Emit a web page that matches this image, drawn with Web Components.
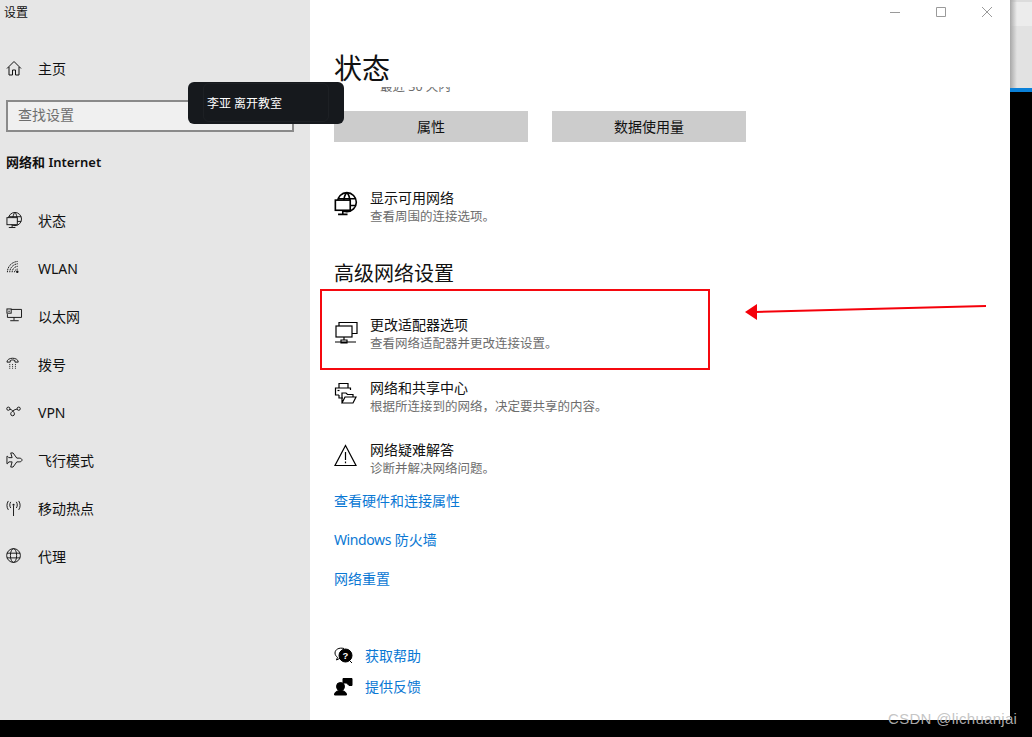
<!DOCTYPE html>
<html lang="zh">
<head>
<meta charset="utf-8">
<title>设置</title>
<style>
    html, body { margin: 0; height: 100%; background: #000; overflow: hidden; }
    body { font-family: "Noto Sans", "Noto Sans CJK SC", sans-serif; }
</style>
</head>
<body>
<settings-desktop>
    <settings-window>
        <settings-sidebar slot="sidebar">
            <nav-item icon="globepc">状态</nav-item>
            <nav-item icon="wifi">WLAN</nav-item>
            <nav-item icon="ethernet">以太网</nav-item>
            <nav-item icon="dial">拨号</nav-item>
            <nav-item icon="vpn">VPN</nav-item>
            <nav-item icon="plane">飞行模式</nav-item>
            <nav-item icon="hotspot">移动热点</nav-item>
            <nav-item icon="globe">代理</nav-item>
        </settings-sidebar>
        <status-page slot="main"></status-page>
    </settings-window>
</settings-desktop>

<script>
const ICONS = {
    home: '<path d="M1 8.5 8 1.5l7 7M3 7v8h3.5v-5h3v5H13V7"/>',
    globepc: '<circle cx="9.5" cy="7.5" r="7"/><path d="M9.5.5c-3 3-3 11 0 14M9.5.5c3 3 3 11 0 14M3 5h13M3 10h13"/><rect x="1" y="6" width="11" height="7.5" fill="#e6e6e6"/><path d="M6.500 13.500v2.500M3 16.500h7"/>',
    globepcw: '<circle cx="9.5" cy="7.5" r="7"/><path d="M9.5.5c-3 3-3 11 0 14M9.5.5c3 3 3 11 0 14M3 5h13M3 10h13"/><rect x="1" y="6" width="11" height="7.5" fill="#fff"/><path d="M6.500 13.500v2.500M3 16.500h7"/>',
    wifi: '<path d="M1.500 13C1.500 7 6 2 12.500 1.500M4 13c0-4.500 3.500-8.500 8.500-9M6.500 13c0-3 2.500-6 6-6.300M9 13c0-1.500 1.300-3.300 3.500-3.300" stroke-dasharray="1.500 .6"/><circle cx="12" cy="12.500" r="1.300" fill="currentColor" stroke="none"/>',
    ethernet: '<path d="M5.500 1.500H16.500V10H1.500V6.500M8.500 10v3M4.500 13.500h9"/><rect x="1" y="1" width="4.500" height="4.500"/><path d="M2.500 2.800h1.500v1.200h-1.500z" fill="currentColor" stroke="none"/>',
    dial: '<path d="M1 6.500C1 1 13 1 13 6.500H9.500V4.800c-1.500-.8-3.500-.8-5 0v1.700z"/><path d="M3.500 9h1M6.500 9h1M9.500 9h1M3.500 11h1M6.500 11h1M9.500 11h1M3.500 13h1M6.500 13h1M9.500 13h1"/>',
    vpn: '<circle cx="2.500" cy="5" r="1.700"/><circle cx="13.500" cy="5" r="1.700"/><path d="M4 5.500c2 0 5 3.500 5 5a2 2 0 0 1-4 0C5 8.500 9 5.500 12 5.500"/>',
    plane: '<path d="M7.500 1H5l1.500 5H3L1.500 4.500H1v8h.5L3 10.500h3.500L5 16h2.500l4-5.500H14c2 0 3-1 3-2s-1-2-3-2h-2.500z"/>',
    hotspot: '<path d="M8 6v11"/><circle cx="8" cy="5" r="1.100" fill="currentColor" stroke="none"/><path d="M5 2c-1.300 2-1.300 4.500 0 6.500M11 2c1.300 2 1.300 4.500 0 6.500M2.500 1C.5 4 .5 7.500 2.500 10.500M13.500 1c2 3 2 6.500 0 9.500"/>',
    globe: '<circle cx="8" cy="8" r="7.300"/><ellipse cx="8" cy="8" rx="3.300" ry="7.300"/><path d="M1 5.500h14M1 10.500h14"/>',
    adapter: '<path d="M5 7V3.500h18v11h-5"/><rect x="2" y="7" width="16" height="11"/><path d="M10 18v3M1 23h21M7 21h6v3H7z"/>',
    share: '<path d="M5 6V1.500h9V6M5 13H1.500V6h15v2M5 13v3h4"/><path d="M8 21V11h4l1.500 1.500H19V15M8 21l3-6h11l-3 6z"/><path d="M3.500 8.500h2"/>',
    warn: '<path d="M11.500 1.500 1 21.500h21z"/><path d="M11.500 8v8M11.500 17.500v1.800"/>',
    help: '<path d="M10 2.500C5 1.200 1 3.500 1 7c0 1.800 1 3.300 2.500 4.300L2.500 14l3.800-1.800"/><circle cx="11.500" cy="9.500" r="6.500" fill="currentColor"/><path d="M15 14l3 3" /><text x="11.500" y="13" font-size="9.500" font-weight="700" font-family="Liberation Sans" text-anchor="middle" fill="#fff" stroke="none">?</text>',
    feedback: '<circle cx="6.500" cy="9.500" r="4" fill="currentColor"/><path d="M.5 18c0-3 2.500-4.500 6-4.500s6 1.500 6 4.500z" fill="currentColor"/><path d="M9 1.500h9v7h-3L12.500 6H9z" fill="currentColor"/>'
};

class SketchIcon extends HTMLElement {
    connectedCallback() {
        var size = this.getAttribute('size') || 16;
        var box = this.getAttribute('box') || 18;
        var weight = this.getAttribute('weight') || 1;
        this.attachShadow({ mode: 'open' }).innerHTML = `
        <style>
            :host { display: inline-flex; flex: none; width: ${size}px; height: ${size}px; color: #111; }
            svg { width: 100%; height: 100%; display: block; fill: none; stroke: currentColor; stroke-width: ${weight}; overflow: visible; }
        </style>
        <svg viewBox="0 0 ${box} ${box}">${ICONS[this.getAttribute('name')] || ''}</svg>`;
    }
}
customElements.define('sketch-icon', SketchIcon);

class SettingsDesktop extends HTMLElement {
    constructor() {
        super();
        this.attachShadow({ mode: 'open' }).innerHTML = `
        <style>
            :host { display: flex; width: 1032px; height: 737px; background: #000; position: relative; overflow: hidden; }
            .strip { flex: 1; align-self: flex-start; height: 92px; position: relative; display: flex; flex-direction: column; }
            .strip i { display: block; }
            .a { height: 2px; background: #dcdcdc; }
            .b { height: 24px; background: #ececec; }
            .c { height: 62px; background: #e2e2e2; }
            .d { height: 4px; background: #0a80d8; }
            .strip::after { content: ""; position: absolute; left: 0; top: 0; bottom: 4px; width: 7px; background: linear-gradient(90deg, #a8a8a8, rgba(200,200,200,0)); }
            .toast { position: absolute; z-index: 5; left: 188px; top: 82px; width: 156px; height: 42px; box-sizing: border-box; background: #16191d; border-radius: 6px; display: flex; align-items: center; }
            .toast span { flex: 1; margin: 2px 16px 3px; height: 37px; display: flex; align-items: center; padding-left: 3px; border-radius: 5px; outline: 1px solid #1d2024; font-size: 12px; color: #fff; }
            .mark { position: absolute; left: 320px; top: 289px; width: 390px; height: 81px; box-sizing: border-box; border: 2px solid #f5090f; }
            .arrow { position: absolute; left: 740px; top: 296px; }
            .wm { position: absolute; left: 888px; top: 710px; font: 15px "Liberation Sans", sans-serif; letter-spacing: .3px; color: rgba(190,190,190,.9); white-space: nowrap; }
        </style>
        <slot></slot>
        <div class="strip"><i class="a"></i><i class="b"></i><i class="c"></i><i class="d"></i></div>
        <div class="toast"><span>李亚 离开教室</span></div>
        <div class="mark"></div>
        <svg class="arrow" width="250" height="30" viewBox="0 0 250 30">
            <path d="M246 10 15 16" stroke="#f5000a" stroke-width="2" fill="none"/>
            <path d="M5 16 17 8V24Z" fill="#f5000a"/>
        </svg>
        <div class="wm">CSDN @lichuanjai</div>`;
    }
}
customElements.define('settings-desktop', SettingsDesktop);

class SettingsWindow extends HTMLElement {
    constructor() {
        super();
        this.attachShadow({ mode: 'open' }).innerHTML = `
        <style>
            :host { display: flex; flex: none; width: 1010px; height: 720px; background: #fff; color: #111; position: relative; }
            .side { flex: none; width: 310px; background: #e6e6e6; }
            .main { flex: 1; min-width: 0; position: relative; }
            .controls { position: absolute; z-index: 2; right: 18px; top: 7px; display: flex; gap: 36px; }
            .controls svg { width: 10px; height: 10px; display: block; stroke: #9a9a9a; fill: none; stroke-width: 1; }
        </style>
        <div class="side"><slot name="sidebar"></slot></div>
        <div class="main">
            <slot name="main"></slot>
            <div class="controls">
                <svg viewBox="0 0 10 10"><path d="M0 5.500H10"/></svg>
                <svg viewBox="0 0 10 10"><path d="M.5.500h9v9h-9z"/></svg>
                <svg viewBox="0 0 10 10"><path d="M0 0 10 10M10 0 0 10"/></svg>
            </div>
        </div>`;
    }
}
customElements.define('settings-window', SettingsWindow);

class SettingsSidebar extends HTMLElement {
    constructor() {
        super();
        this.attachShadow({ mode: 'open' }).innerHTML = `
        <style>
            :host { display: block; font-size: 14px; color: #111; }
            .title { height: 26px; line-height: 26px; padding-left: 4px; font-size: 12px; }
            .home { margin-top: 18px; }
            .search { margin: 8px 16px 0 6px; height: 32px; box-sizing: border-box; border: 2px solid #8a8a8a; background: #f0f0f0; color: #6e6e6e; line-height: 25px; padding-left: 10px; }
            h2 { margin: 20px 0 24px; padding-left: 6px; font-size: 13px; line-height: 20px; font-weight: 600; }
        </style>
        <div class="title">设置</div>
        <nav-item class="home" icon="home">主页</nav-item>
        <div class="search">查找设置</div>
        <h2>网络和 Internet</h2>
        <slot></slot>`;
    }
}
customElements.define('settings-sidebar', SettingsSidebar);

class NavItem extends HTMLElement {
    constructor() {
        super();
        var icon = this.getAttribute('icon');
        this.attachShadow({ mode: 'open' }).innerHTML = `
        <style>
            :host { display: flex; align-items: center; height: 48px; padding-left: 6px; gap: 16px; font-size: 14px; }
            sketch-icon { color: #111; }
        </style>
        <sketch-icon name="${icon}" size="16" box="${icon === 'home' ? 16 : 17}"></sketch-icon>
        <span><slot></slot></span>`;
    }
}
customElements.define('nav-item', NavItem);

class PushButton extends HTMLElement {
    constructor() {
        super();
        this.attachShadow({ mode: 'open' }).innerHTML = `
        <style>
            :host { display: flex; align-items: center; justify-content: center; width: 194px; height: 31px; box-sizing: border-box; padding-bottom: 2px; background: #ccc; font-size: 14px; color: #111; }
        </style>
        <slot></slot>`;
    }
}
customElements.define('push-button', PushButton);

class LinkRow extends HTMLElement {
    constructor() {
        super();
        this.attachShadow({ mode: 'open' }).innerHTML = `
        <style>
            :host { display: flex; gap: 13px; align-items: flex-start; height: 36px; }
            .icon { width: 23px; height: 24px; flex: none; margin-top: 3px; }
            .title { font-size: 14px; line-height: 18px; color: #111; }
            .desc { font-size: 12.500px; line-height: 18px; margin-top: 1px; color: #6d6d6d; white-space: nowrap; }
            sketch-icon { color: #000; }
        </style>
        <div class="icon"><sketch-icon name="${this.getAttribute('icon')}" size="23" weight="1.200" box="${this.getAttribute('box') || 23}"></sketch-icon></div>
        <div>
            <div class="title">${this.getAttribute('label')}</div>
            <div class="desc"><slot></slot></div>
        </div>`;
    }
}
customElements.define('link-row', LinkRow);

class StatusPage extends HTMLElement {
    constructor() {
        super();
        this.attachShadow({ mode: 'open' }).innerHTML = `
        <style>
            :host { display: block; padding-left: 24px; height: 720px; box-sizing: border-box; overflow: hidden; }
            header { height: 87px; padding-top: 48px; box-sizing: border-box; font-size: 28px; line-height: 40px; background: #fff; position: relative; color: #111; }
            .cut { height: 24px; overflow: hidden; }
            .cut span { display: block; margin: -9px 0 0 46px; font-size: 12.500px; line-height: 18px; color: #6d6d6d; }
            .btns { display: flex; gap: 24px; margin-bottom: 47px; }
            h3 { margin: 35px 0 28px; font-size: 20px; line-height: 28px; font-weight: 400; color: #111; }
            link-row + link-row { margin-top: 26px; }
            .first + link-row { margin-top: 27px; }
            a { display: block; font-size: 14px; line-height: 20px; color: #0a78d4; margin-top: 19px; }
            a.top { margin-top: 14px; }
            a b { font-weight: 400; letter-spacing: -.4px; }
            .help { display: flex; align-items: center; gap: 13px; height: 20px; font-size: 14px; color: #0a78d4; }
            .help sketch-icon { color: #000; }
            .help.one { margin-top: 56px; }
            .help.two { margin-top: 11px; }
        </style>
        <header>状态</header>
        <div class="cut"><span>最近 30 天内</span></div>
        <div class="btns"><push-button>属性</push-button><push-button>数据使用量</push-button></div>
        <link-row icon="globepcw" box="17" label="显示可用网络">查看周围的连接选项。</link-row>
        <h3>高级网络设置</h3>
        <link-row class="first" icon="adapter" label="更改适配器选项">查看网络适配器并更改连接设置。</link-row>
        <link-row icon="share" label="网络和共享中心">根据所连接到的网络，决定要共享的内容。</link-row>
        <link-row icon="warn" label="网络疑难解答">诊断并解决网络问题。</link-row>
        <a class="top">查看硬件和连接属性</a>
        <a><b>Windows</b> 防火墙</a>
        <a>网络重置</a>
        <div class="help one"><sketch-icon name="help" size="18" box="18"></sketch-icon><span>获取帮助</span></div>
        <div class="help two"><sketch-icon name="feedback" size="18" box="18"></sketch-icon><span>提供反馈</span></div>`;
    }
}
customElements.define('status-page', StatusPage);
</script>
</body>
</html>
